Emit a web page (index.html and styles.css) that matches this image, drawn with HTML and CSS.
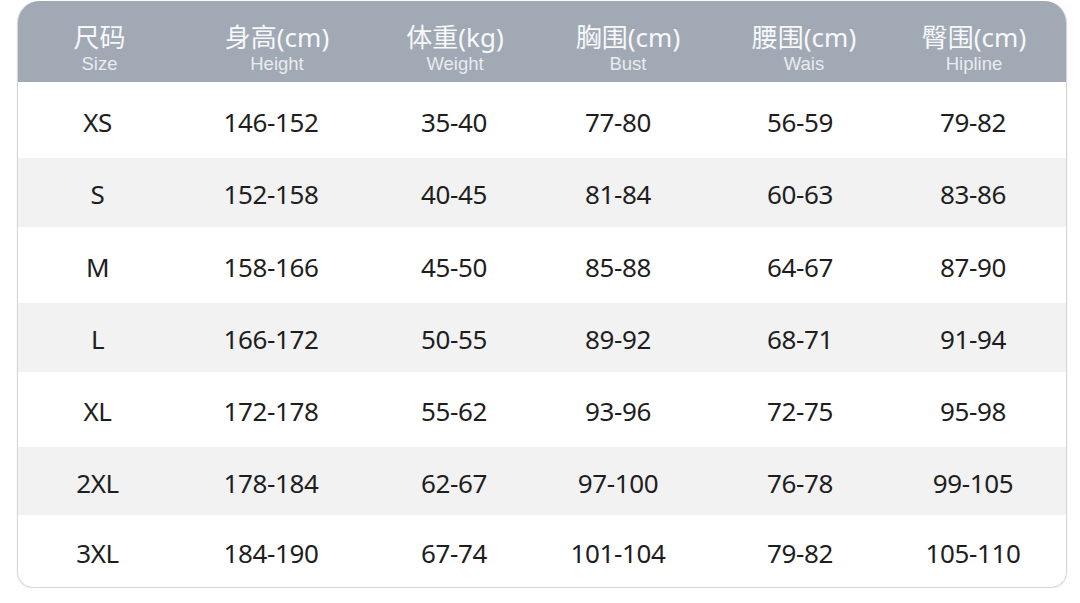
FILE: index.html
```html
<!DOCTYPE html>
<html lang="zh">
<head>
<meta charset="utf-8">
<link rel="stylesheet" href="styles.css">
</head>
<body>
<div class="card">
  <div class="row head">
    <div class="cell"><span class="zh">尺码</span><span class="en">Size</span></div>
    <div class="cell"><span class="zh">身高(cm)</span><span class="en">Height</span></div>
    <div class="cell"><span class="zh">体重(kg)</span><span class="en">Weight</span></div>
    <div class="cell"><span class="zh">胸围(cm)</span><span class="en">Bust</span></div>
    <div class="cell"><span class="zh">腰围(cm)</span><span class="en">Wais</span></div>
    <div class="cell"><span class="zh">臀围(cm)</span><span class="en">Hipline</span></div>
  </div>
  <div class="row body r1"><div class="cell">XS</div><div class="cell">146-152</div><div class="cell">35-40</div><div class="cell">77-80</div><div class="cell">56-59</div><div class="cell">79-82</div></div>
  <div class="row body r2 alt"><div class="cell">S</div><div class="cell">152-158</div><div class="cell">40-45</div><div class="cell">81-84</div><div class="cell">60-63</div><div class="cell">83-86</div></div>
  <div class="row body r3"><div class="cell">M</div><div class="cell">158-166</div><div class="cell">45-50</div><div class="cell">85-88</div><div class="cell">64-67</div><div class="cell">87-90</div></div>
  <div class="row body r4 alt"><div class="cell">L</div><div class="cell">166-172</div><div class="cell">50-55</div><div class="cell">89-92</div><div class="cell">68-71</div><div class="cell">91-94</div></div>
  <div class="row body r5"><div class="cell">XL</div><div class="cell">172-178</div><div class="cell">55-62</div><div class="cell">93-96</div><div class="cell">72-75</div><div class="cell">95-98</div></div>
  <div class="row body r6 alt"><div class="cell">2XL</div><div class="cell">178-184</div><div class="cell">62-67</div><div class="cell">97-100</div><div class="cell">76-78</div><div class="cell">99-105</div></div>
  <div class="row body r7"><div class="cell">3XL</div><div class="cell">184-190</div><div class="cell">67-74</div><div class="cell">101-104</div><div class="cell">79-82</div><div class="cell">105-110</div></div>
</div>
</body>
</html>
```
FILE: styles.css
```css
html, body {
  margin: 0;
  padding: 0;
  background: #ffffff;
}
body {
  padding: 1px 0 0 17px;
  font-family: "Noto Sans", "Noto Sans CJK SC", sans-serif;
}
.card {
  width: 1050px;
  height: 587px;
  box-sizing: border-box;
  border: 1px solid #d6d6d6;
  border-top: none;
  border-radius: 22px 22px 16px 16px;
  overflow: hidden;
  display: flex;
  flex-direction: column;
  box-shadow: 0 1px 2px rgba(0,0,0,0.08);
}
.row {
  display: grid;
  align-items: center;
  flex: none;
}
.body {
  grid-template-columns: 159px 188px 178px 150px 214px 132px;
  padding-top: 3px;
  box-sizing: border-box;
}
.body .cell {
  text-align: center;
  font-size: 26px;
  letter-spacing: -0.4px;
  color: #1e1e1e;
}
.head {
  height: 81px;
  grid-template-columns: 163px 192px 164px 182px 170px 170px;
  background: #a0a9b4;
  align-items: start;
}
.head .cell {
  display: flex;
  flex-direction: column;
  align-items: center;
  padding-top: 18px;
}
.head .zh {
  font-size: 26px;
  line-height: 36px;
  height: 36px;
  color: #f7f8fa;
}
.head .en {
  font-family: "Liberation Sans", Arial, sans-serif;
  font-size: 18.5px;
  line-height: 18px;
  color: #e9ecef;
}
.r1 { height: 76px; }
.r2 { height: 69px; }
.r3 { height: 76px; }
.r4 { height: 69px; }
.r5 { height: 75px; }
.r6 { height: 68px; }
.r7 { flex: 1; }
.alt {
  background: #f2f2f2;
}
```
